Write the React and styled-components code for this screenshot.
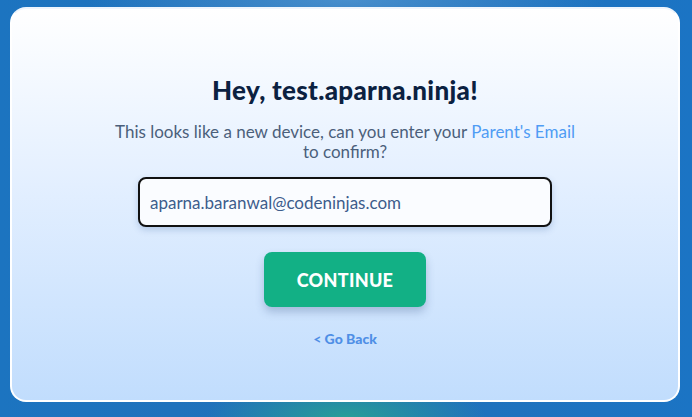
import React from "react";
import styled, { createGlobalStyle } from "styled-components";

const Global = createGlobalStyle`
  html, body { margin: 0; padding: 0; }
  body { font-family: "Lato", "Noto Sans", sans-serif; }
  #root { width: 692px; height: 417px; }
`;

const Screen = styled.div`
  width: 692px;
  height: 417px;
  box-sizing: border-box;
  padding: 7px 12px 15px 10px;
  background:
    radial-gradient(ellipse 140px 40px at 50% 100%, rgba(40, 160, 150, 0.95), rgba(40, 160, 150, 0) 100%),
    radial-gradient(ellipse 260px 40px at 50% 0%, rgba(80, 150, 210, 0.8), rgba(80, 150, 210, 0) 100%),
    linear-gradient(90deg, #1c74c0 0%, #2270b8 50%, #1b74c4 100%);
`;

const Card = styled.div`
  height: 100%;
  box-sizing: border-box;
  border: 2px solid #ffffff;
  border-top-color: #eef5fd;
  border-radius: 16px;
  background: linear-gradient(180deg, #ffffff 0%, #e3efff 45%, #c1ddfd 100%);
  display: flex;
  flex-direction: column;
  align-items: center;
  padding-top: 66px;
`;

const Title = styled.h1`
  margin: 0;
  font-family: "Lato", sans-serif;
  font-weight: 900;
  font-size: 26px;
  line-height: 30px;
  color: #0b2141;
  letter-spacing: 0.3px;
`;

const Message = styled.p`
  margin: 17px 0 0;
  width: 470px;
  text-align: center;
  font-family: "Lato", sans-serif;
  font-size: 17px;
  line-height: 20px;
  color: #4b5f7b;
`;

const Link = styled.span`
  color: #4f9cf4;
`;

const Input = styled.input`
  margin-top: 15px;
  width: 414px;
  height: 50px;
  box-sizing: border-box;
  border: 2px solid #111111;
  border-radius: 8px;
  background: #fafcff;
  padding: 0 10px;
  font-family: "Lato", sans-serif;
  font-size: 17px;
  color: #3d5d8c;
  box-shadow: 0 3px 6px rgba(60, 100, 160, 0.25);
  outline: none;
`;

const Button = styled.button`
  margin-top: 25px;
  width: 162px;
  height: 55px;
  border: none;
  border-radius: 8px;
  background: #12b085;
  color: #ffffff;
  font-family: "Lato", sans-serif;
  font-weight: 900;
  font-size: 18px;
  letter-spacing: 0.3px;
  box-shadow: 0 5px 8px rgba(60, 90, 140, 0.3);
  cursor: pointer;
`;

const Back = styled.a`
  margin-top: 23px;
  font-family: "Lato", sans-serif;
  font-weight: 900;
  font-size: 14px;
  color: #4f8fe6;
  text-decoration: none;
`;

export default function App() {
  return (
    <>
      <Global />
      <Screen>
        <Card>
          <Title>Hey, test.aparna.ninja!</Title>
          <Message>
            This looks like a new device, can you enter your <Link>Parent's Email</Link> to confirm?
          </Message>
          <Input defaultValue="aparna.baranwal@codeninjas.com" />
          <Button>CONTINUE</Button>
          <Back href="#">&lt; Go Back</Back>
        </Card>
      </Screen>
    </>
  );
}
